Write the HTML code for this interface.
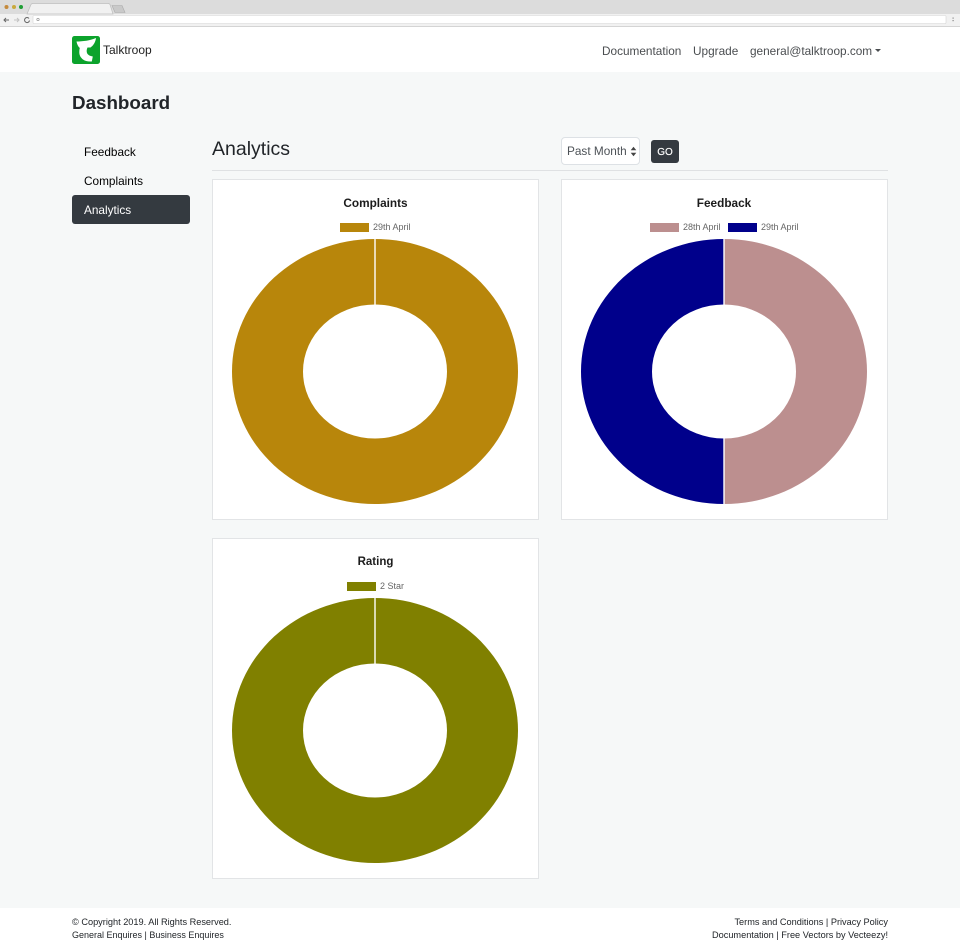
<!DOCTYPE html>
<html lang="en">
<head>
<meta charset="utf-8">
<title>Talktroop Dashboard</title>
<style>
html,body{margin:0;padding:0}
body{position:relative;width:960px;height:949px;overflow:hidden;background:#f6f8f8;font-family:"Liberation Sans",sans-serif;color:#212529}
.a{position:absolute;white-space:nowrap}
.card{position:absolute;width:325px;height:339px;background:#fff;border:1px solid #e2e4e6;box-sizing:content-box}
.t{font-weight:bold;font-size:11.8px;color:#1c1c1c;text-align:center;transform:translateX(-50%)}
.l{font-size:9px;color:#666}
.sw{position:absolute;width:29px;height:9px}
.n{font-size:11.8px;color:#000}
.f{font-size:9.2px;color:#212529}
.top{font-size:11.8px;color:#4a4d50}
</style>
</head>
<body>
<!-- browser chrome -->
<div class="a" style="left:0;top:0;width:960px;height:14px;background:#dcdcdc"></div>
<div class="a" style="left:0;top:14px;width:960px;height:13px;background:#f1f1f1;border-bottom:1px solid #d4d4d4;box-sizing:border-box"></div>
<svg class="a" style="left:0;top:0" width="960" height="27" viewBox="0 0 960 27">
<path d="M27 14 L31 4.500 Q31.500 3.500 33 3.500 L108 3.500 Q109.500 3.500 110 4.500 L113 14 Z" fill="#f1f1f1" stroke="#bdbdbd" stroke-width=".7"/>
<path d="M112 5.500 L122 5.500 L125 12.500 L115 12.500 Z" fill="#c9c9c9" stroke="#aaa" stroke-width=".6"/>
<circle cx="6.500" cy="7" r="2" fill="#c58a3c"/>
<circle cx="14" cy="7" r="2" fill="#c9a93c"/>
<circle cx="21" cy="7" r="2" fill="#1f9e35"/>
<rect x="33" y="15.500" width="913" height="8" rx="1" fill="#fff" stroke="#d6d6d6" stroke-width=".6"/>
<path d="M9 20 H4 M6 18 L4 20 L6 22" fill="none" stroke="#666" stroke-width="1"/>
<path d="M14 20 H19 M17 18 L19 20 L17 22" fill="none" stroke="#c2c2c2" stroke-width="1"/>
<path d="M29 18.500 A2.500 2.500 0 1 0 29.500 20.500" fill="none" stroke="#666" stroke-width="1"/>
<circle cx="38" cy="19.500" r="1.200" fill="none" stroke="#888" stroke-width=".6"/>
<rect x="952.500" y="17.500" width="1.200" height="1.200" fill="#888"/>
<rect x="952.500" y="20" width="1.200" height="1.200" fill="#888"/>
</svg>

<!-- navbar -->
<div class="a" style="left:0;top:27px;width:960px;height:45px;background:#fff"></div>
<svg class="a" style="left:72px;top:36px" width="28" height="28" viewBox="0 0 28 28">
<rect width="28" height="28" rx="2.500" fill="#0ca32c"/>
<path d="M4.500 5.500 C11 5.500 18 4.500 24 2 C23.500 6 21.500 9.500 18.500 11.500 L15.500 11.500 C14.500 13.500 14.500 15.500 15 17 C16 19 18 20 20.800 20.500 L19.800 25.500 C16 25.800 13 25 11 23.500 C8.500 21.500 7.300 19 7.300 16.500 C7.300 14.500 7.500 13 7.800 12 C6 10.500 5 8 4.500 5.500 Z" fill="#fff"/>
</svg>
<div class="a" style="left:103px;top:42px;font-size:12px;line-height:16px;color:#222">Talktroop</div>
<div class="a top" style="left:602px;top:43px;line-height:16px">Documentation</div>
<div class="a top" style="left:693px;top:43px;line-height:16px">Upgrade</div>
<div class="a top" style="left:750px;top:43px;line-height:16px">general@talktroop.com</div>
<div class="a" style="left:875px;top:49px;width:0;height:0;border-left:3.500px solid transparent;border-right:3.500px solid transparent;border-top:3.500px solid #4a4d50"></div>

<!-- heading -->
<div class="a" style="left:72px;top:91px;font-size:18.800px;line-height:24px;font-weight:bold;color:#212529">Dashboard</div>

<!-- side nav -->
<div class="a n" style="left:84px;top:144px;line-height:16px">Feedback</div>
<div class="a n" style="left:84px;top:173px;line-height:16px">Complaints</div>
<div class="a" style="left:72px;top:195px;width:118px;height:29px;background:#343a40;border-radius:3px"></div>
<div class="a n" style="left:84px;top:202px;line-height:16px;color:#fff">Analytics</div>

<!-- section head -->
<div class="a" style="left:212px;top:137px;font-size:19.500px;line-height:25px;color:#212529">Analytics</div>
<div class="a" style="left:561px;top:137px;width:79px;height:28px;box-sizing:border-box;background:#fff;border:1px solid #dde1e5;border-radius:4px"></div>
<div class="a" style="left:567px;top:143px;font-size:11.800px;line-height:16px;color:#4d5257">Past Month</div>
<svg class="a" style="left:630px;top:146px" width="7" height="11" viewBox="0 0 7 11"><path d="M.7 4.300 L3.500 .8 L6.300 4.300 Z M.7 6.700 L3.500 10.200 L6.300 6.700 Z" fill="#444"/></svg>
<div class="a" style="left:651px;top:140px;width:28px;height:23px;background:#343a40;border-radius:3px;color:#fff;font-size:10px;line-height:25px;text-align:center;-webkit-text-stroke:.15px #fff">GO</div>
<div class="a" style="left:212px;top:170px;width:676px;height:1px;background:#dfe1e3"></div>

<!-- cards -->
<div class="card" style="left:212px;top:179px"></div>
<div class="card" style="left:561px;top:179px"></div>
<div class="card" style="left:212px;top:538px"></div>

<div class="a t" style="left:375.500px;top:196px;line-height:15px">Complaints</div>
<div class="sw" style="left:340px;top:223px;background:#b8860b"></div>
<div class="a l" style="left:373px;top:222px;line-height:11px">29th April</div>

<div class="a t" style="left:724px;top:196px;line-height:15px">Feedback</div>
<div class="sw" style="left:650px;top:223px;background:#bc8f8f"></div>
<div class="a l" style="left:683px;top:222px;line-height:11px">28th April</div>
<div class="sw" style="left:728px;top:223px;background:#00008b"></div>
<div class="a l" style="left:761px;top:222px;line-height:11px">29th April</div>

<div class="a t" style="left:375.500px;top:555px;line-height:15px;font-size:11.500px">Rating</div>
<div class="sw" style="left:347px;top:582px;background:#808000"></div>
<div class="a l" style="left:380px;top:581px;line-height:11px">2 Star</div>

<svg class="a" style="left:0;top:0" width="960" height="949" viewBox="0 0 960 949">
<ellipse cx="375" cy="371.500" rx="143" ry="132.500" fill="#b8860b"/>
<ellipse cx="375" cy="371.500" rx="72" ry="67" fill="#fff"/>
<rect x="374.300" y="238" width="1.400" height="67" fill="#fff"/>

<path d="M724 239 A143 132.500 0 0 1 724 504 L724 438.500 A72 67 0 0 0 724 304.500 Z" fill="#bc8f8f"/>
<path d="M724 239 A143 132.500 0 0 0 724 504 L724 438.500 A72 67 0 0 1 724 304.500 Z" fill="#00008b"/>
<rect x="723.300" y="238" width="1.400" height="67" fill="#fff"/>
<rect x="723.300" y="438" width="1.400" height="67" fill="#fff"/>

<ellipse cx="375" cy="730.500" rx="143" ry="132.500" fill="#808000"/>
<ellipse cx="375" cy="730.500" rx="72" ry="67" fill="#fff"/>
<rect x="374.300" y="597" width="1.400" height="67" fill="#fff"/>
</svg>

<!-- footer -->
<div class="a" style="left:0;top:908px;width:960px;height:41px;background:#fff"></div>
<div class="a f" style="left:72px;top:916px;line-height:12px">© Copyright 2019. All Rights Reserved.</div>
<div class="a f" style="left:72px;top:929px;line-height:12px;font-size:9px">General Enquires | Business Enquires</div>
<div class="a f" style="right:72px;top:916px;line-height:12px">Terms and Conditions | Privacy Policy</div>
<div class="a f" style="right:72px;top:929px;line-height:12px">Documentation | Free Vectors by Vecteezy!</div>
</body>
</html>
